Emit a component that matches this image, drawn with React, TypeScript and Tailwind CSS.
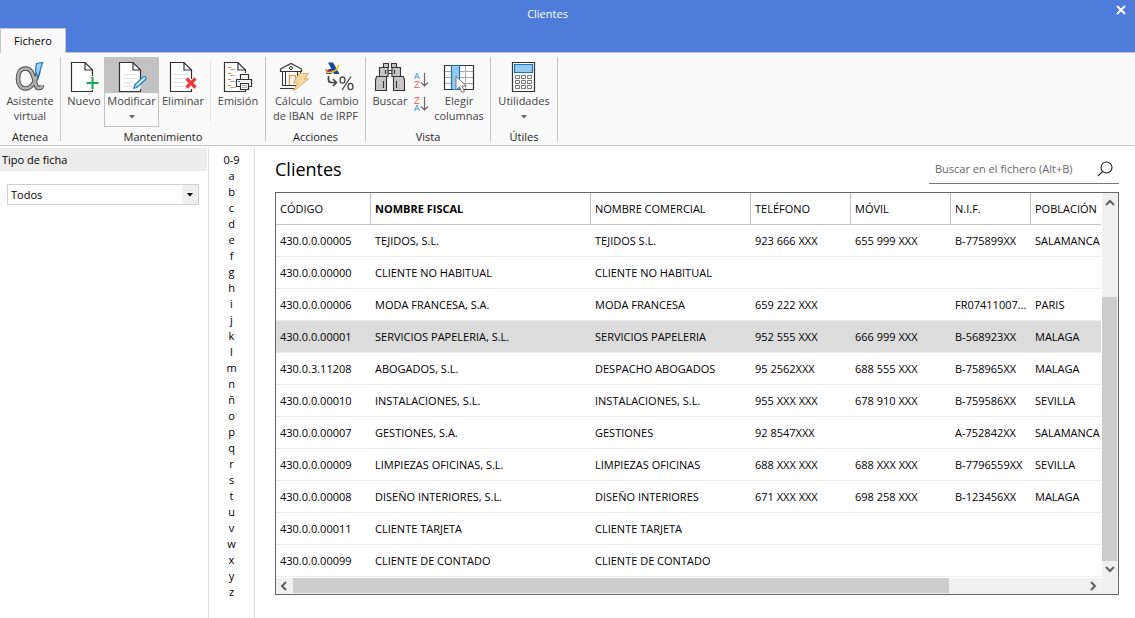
import { useState } from 'react';
import type { ReactNode } from 'react';
import { clsx } from 'clsx';

interface Cliente {
  codigo: string;
  fiscal: string;
  comercial: string;
  telefono: string;
  movil: string;
  nif: string;
  poblacion: string;
}

const CLIENTES: Cliente[] = [
  { codigo: '430.0.0.00005', fiscal: 'TEJIDOS, S.L.', comercial: 'TEJIDOS S.L.', telefono: '923 666 XXX', movil: '655 999 XXX', nif: 'B-775899XX', poblacion: 'SALAMANCA' },
  { codigo: '430.0.0.00000', fiscal: 'CLIENTE NO HABITUAL', comercial: 'CLIENTE NO HABITUAL', telefono: '', movil: '', nif: '', poblacion: '' },
  { codigo: '430.0.0.00006', fiscal: 'MODA FRANCESA, S.A.', comercial: 'MODA FRANCESA', telefono: '659 222 XXX', movil: '', nif: 'FR07411007...', poblacion: 'PARIS' },
  { codigo: '430.0.0.00001', fiscal: 'SERVICIOS PAPELERIA, S.L.', comercial: 'SERVICIOS PAPELERIA', telefono: '952 555 XXX', movil: '666 999 XXX', nif: 'B-568923XX', poblacion: 'MALAGA' },
  { codigo: '430.0.3.11208', fiscal: 'ABOGADOS, S.L.', comercial: 'DESPACHO ABOGADOS', telefono: '95 2562XXX', movil: '688 555 XXX', nif: 'B-758965XX', poblacion: 'MALAGA' },
  { codigo: '430.0.0.00010', fiscal: 'INSTALACIONES, S.L.', comercial: 'INSTALACIONES, S.L.', telefono: '955 XXX XXX', movil: '678 910 XXX', nif: 'B-759586XX', poblacion: 'SEVILLA' },
  { codigo: '430.0.0.00007', fiscal: 'GESTIONES, S.A.', comercial: 'GESTIONES', telefono: '92 8547XXX', movil: '', nif: 'A-752842XX', poblacion: 'SALAMANCA' },
  { codigo: '430.0.0.00009', fiscal: 'LIMPIEZAS OFICINAS, S.L.', comercial: 'LIMPIEZAS OFICINAS', telefono: '688 XXX XXX', movil: '688 XXX XXX', nif: 'B-7796559XX', poblacion: 'SEVILLA' },
  { codigo: '430.0.0.00008', fiscal: 'DISEÑO INTERIORES, S.L.', comercial: 'DISEÑO INTERIORES', telefono: '671 XXX XXX', movil: '698 258 XXX', nif: 'B-123456XX', poblacion: 'MALAGA' },
  { codigo: '430.0.0.00011', fiscal: 'CLIENTE TARJETA', comercial: 'CLIENTE TARJETA', telefono: '', movil: '', nif: '', poblacion: '' },
  { codigo: '430.0.0.00099', fiscal: 'CLIENTE DE CONTADO', comercial: 'CLIENTE DE CONTADO', telefono: '', movil: '', nif: '', poblacion: '' },
];

const COLUMNAS: { id: keyof Cliente; titulo: string; ancho: string }[] = [
  { id: 'codigo', titulo: 'CÓDIGO', ancho: 'w-[95px]' },
  { id: 'fiscal', titulo: 'NOMBRE FISCAL', ancho: 'w-[220px]' },
  { id: 'comercial', titulo: 'NOMBRE COMERCIAL', ancho: 'w-[160px]' },
  { id: 'telefono', titulo: 'TELÉFONO', ancho: 'w-[100px]' },
  { id: 'movil', titulo: 'MÓVIL', ancho: 'w-[100px]' },
  { id: 'nif', titulo: 'N.I.F.', ancho: 'w-[80px]' },
  { id: 'poblacion', titulo: 'POBLACIÓN', ancho: 'w-auto' },
];

const INDICE = ['0-9', ...'abcdefghijklmnñopqrstuvwxyz'];

/* ---------- Iconos ---------- */

function Hoja({ lineas, children }: { lineas?: boolean; children?: ReactNode }) {
  return (
    <svg width="30" height="32" viewBox="-1 0 30 32" fill="none">
      <path d="M1.5 1.5H15L22.5 9V30.5H1.5Z" fill="#fff" />
      <path d="M22.5 18V9L15 1.5H1.5V30.5H22.5V28" stroke="#333" strokeWidth="1.200" />
      <path d="M15 1.5V9H22.5" stroke="#333" strokeWidth="1.200" />
      {lineas && <path d="M5 13.5H19M5 17.5H17M5 21.5H16M5 25.5H15" stroke="#e2e2e2" />}
      {children}
    </svg>
  );
}

// Letra alfa con trazo hueco y pluma azul
function IconoAlfa() {
  const trazo = 'M24.5 10C22 19.5 18 27.5 11.5 27.5C6.500 27.500 4 23 4 17.500C4 11.500 6.500 7.500 11.500 7.500C19 7.500 19.500 17 22 24.500C23 28 27.500 28 28 24';
  return (
    <svg width="32" height="32" viewBox="0 0 32 32" fill="none">
      <path d={trazo} stroke="#505050" strokeWidth="4.600" />
      <path d={trazo} stroke="#b0b0b0" strokeWidth="2.600" />
      <path d="M22.500 2.500L28.500 1.500L24 17L21.500 10Z" fill="#9fd0f5" stroke="#1b75bb" strokeWidth="1.200" />
    </svg>
  );
}

function IconoNuevo() {
  return (
    <Hoja>
      <path d="M22.500 15V29M15.500 22H28.500" stroke="#fafafa" strokeWidth="4" />
      <path d="M22.500 16V28M16.500 22H28.500" stroke="#17a750" strokeWidth="2" />
    </Hoja>
  );
}

function IconoModificar() {
  return (
    <Hoja lineas>
      <path d="M15.800 27.500L17 23.500L25.500 15.800Q27.500 15 28 17L27.500 18.500L19.500 26Z" fill="#d5eafa" stroke="#1c83c6" strokeWidth="1.200" strokeLinejoin="round" />
      <path d="M17 23.500L19.500 26" stroke="#1c83c6" />
    </Hoja>
  );
}

function IconoEliminar() {
  return (
    <Hoja lineas>
      <path d="M17.500 17.500L26.500 26.500M26.500 17.500L17.500 26.500" stroke="#fafafa" strokeWidth="5" />
      <path d="M17.500 17.500L26.500 26.500M26.500 17.500L17.500 26.500" stroke="#ec3a3a" strokeWidth="3.200" />
    </Hoja>
  );
}

function IconoEmision() {
  return (
    <svg width="30" height="32" viewBox="0 0 30 32" fill="none">
      <path d="M22.500 12V9L15 1.500H1.500V30.500H22.500V29" fill="#fff" stroke="#333" strokeWidth="1.200" />
      <path d="M15 1.500V9H22.500" stroke="#333" strokeWidth="1.200" />
      <path d="M5 6.500H8M5 12.500H8M5 18.500H8M5 24.500H8" stroke="#f08c1e" />
      <path d="M7 8.500H12M7 14.500H12M7 20.500H12M7 26.500H13" stroke="#aaa" />
      <path d="M17.500 18V13.500H25.500V18M17 25.500H13.500V18.500H28.500V25.500H26" fill="#fafafa" stroke="#333" strokeWidth="1.200" />
      <path d="M17.500 22.500H25.500V28.500H17.500Z" fill="#fff" stroke="#333" strokeWidth="1.200" />
      <path d="M15 20.500H17" stroke="#1c83c6" />
      <path d="M19 24.500H24M19 26.500H24" stroke="#aaa" />
    </svg>
  );
}

function IconoIban() {
  return (
    <svg width="32" height="32" viewBox="0 0 32 32" fill="none">
      <path d="M2.500 8L13 2.500L23.500 8V10.500H2.500ZM4 24.500H18M2 27.500H18" stroke="#333" strokeWidth="1.200" />
      <path d="M4.500 11V24M7.500 11V24M19.500 11V15M22.500 11V13" stroke="#333" />
      <circle cx="13" cy="7" r="1.500" stroke="#333" />
      <path d="M11.500 24V14.500H17.500V22" stroke="#ee9440" strokeWidth="1.200" />
      <path d="M21.500 12.500H30.500L26.500 18H30.500L15.500 30L19.500 22H15Z" fill="#fad9a2" stroke="#e9a860" />
    </svg>
  );
}

function IconoIrpf() {
  return (
    <svg width="32" height="32" viewBox="0 0 32 32" fill="none">
      <path d="M5 1.500H10L16.500 13H11Z" fill="#1746a2" />
      <path d="M5 8.500L9 7.500L8.500 13H3Z" fill="#1746a2" />
      <path d="M3 10.500C6 12.500 14 11.500 16 3.500" stroke="#fbc500" strokeWidth="1.600" />
      <path d="M2.500 8.500C4 10 6 10.800 8.500 10.200" stroke="#e43a35" strokeWidth="1.200" />
      <path d="M5.500 15V18.500Q5.500 21.500 8.500 21.500H13M10 18L13.500 21.500L10 25" stroke="#444" strokeWidth="1.700" />
      <ellipse cx="19.500" cy="19" rx="2.500" ry="3.200" stroke="#444" strokeWidth="1.300" />
      <ellipse cx="27.500" cy="25.500" rx="2.500" ry="3.200" stroke="#444" strokeWidth="1.300" />
      <path d="M28 15.500L19 29" stroke="#444" strokeWidth="1.300" />
    </svg>
  );
}

function IconoBuscar() {
  return (
    <svg width="32" height="32" viewBox="0 0 32 32" fill="#c6c6c6" stroke="#333" strokeWidth="1.100">
      <path d="M14 9.500H18V12.500H14Z" fill="#fff" />
      <path d="M9.500 2.500H14.500V6.500H9.500ZM17.500 2.500H22.500V6.500H17.500Z" />
      <path d="M5.500 6.500H14V15.500H5.500ZM18 6.500H26.500V15.500H18Z" />
      <path d="M2.500 15.500H12.500V29.500H1.500V19ZM19.500 15.500H29.500L30.500 19V29.500H19.500Z" />
      <path d="M9.500 20V27M22.500 20V27M11.500 9V13M20.500 9V13" />
    </svg>
  );
}

function IconoOrden({ inverso }: { inverso?: boolean }) {
  const letraA = 'M0.500 6L3 0L5.500 6M1.500 4H4.500';
  const letraZ = 'M0.500 0.500H5L0.500 6.500H5.500';
  return (
    <svg width="16" height="16" viewBox="0 0 16 16" fill="none">
      <path d={inverso ? letraZ : letraA} stroke={inverso ? '#f06a6a' : '#49a1d8'} transform="translate(1 1)" />
      <path d={inverso ? letraA : letraZ} stroke={inverso ? '#49a1d8' : '#f06a6a'} transform="translate(1 9)" />
      <path d="M11.500 1V13.500M8 10.500L11.500 14L15 10.500" stroke="#666" strokeWidth="1.200" />
    </svg>
  );
}

function IconoColumnas() {
  return (
    <svg width="32" height="32" viewBox="0 0 32 32" fill="none">
      <path d="M1.500 4.500H30.500V28.500H1.500Z" fill="#fff" />
      <path d="M2 10.500H30M2 16.500H30M2 22.500H30M22.500 5V28" stroke="#aaa" />
      <path d="M1.500 4.500H30.500V28.500H1.500Z" stroke="#333" strokeWidth="1.200" />
      <path d="M8.500 4.500H16.500V28.500H8.500Z" fill="#94c9f0" stroke="#1b75bb" strokeWidth="1.200" />
      <path d="M13 15.500V29L16.500 26L19 31.500L21.500 30.500L19 25H23.500Z" fill="#fff" stroke="#777" />
    </svg>
  );
}

function IconoCalculadora() {
  return (
    <svg width="32" height="32" viewBox="0 0 32 32" fill="none">
      <path d="M4.500 1.500H26.500V30.500H4.500Z" fill="#fff" stroke="#333" strokeWidth="1.200" />
      <path d="M6.500 3.500H24.500V11.500H6.500Z" fill="#94c9f0" stroke="#1b75bb" strokeWidth="1.200" />
      <path
        d="M7.500 14.500H11.500V17.500H7.500ZM13.500 14.500H17.500V17.500H13.500ZM19.500 14.500H23.500V17.500H19.500ZM7.500 19.500H11.500V22.500H7.500ZM13.500 19.500H17.500V22.500H13.500ZM19.500 19.500H23.500V22.500H19.500ZM7.500 24.500H11.500V27.500H7.500ZM13.500 24.500H17.500V27.500H13.500ZM19.500 24.500H23.500V27.500H19.500Z"
        stroke="#777"
      />
    </svg>
  );
}

function Triangulo({ className }: { className?: string }) {
  return (
    <svg width="6" height="4" viewBox="0 0 6 4" fill="currentColor" className={className}>
      <path d="M0 0H6L3 3.500Z" />
    </svg>
  );
}

function Flecha({ d }: { d: string }) {
  return (
    <svg width="16" height="16" viewBox="0 0 16 16" fill="none">
      <path d={d} stroke="#606060" strokeWidth="2" />
    </svg>
  );
}

/* ---------- Cinta de opciones ---------- */

function Grupo({ titulo, ancho, children }: { titulo: string; ancho: string; children: ReactNode }) {
  return (
    <section aria-label={titulo} className={clsx('flex h-[84px] shrink-0 flex-col justify-between border-r border-[#c6c6c6]', ancho)}>
      <div className="flex justify-center">{children}</div>
      <div className="text-center text-[11px] leading-2 text-[#222]">{titulo}</div>
    </section>
  );
}

interface BotonCintaProps {
  icono: ReactNode;
  lineas: string[];
  ancho: string;
  activo?: boolean;
  menu?: boolean;
}

function BotonCinta({ icono, lineas, ancho, activo, menu }: BotonCintaProps) {
  return (
    <button
      type="button"
      className={clsx(
        'flex h-[70px] shrink-0 flex-col items-center border text-[11px] leading-[15px] whitespace-nowrap text-[#444]',
        ancho,
        activo ? 'border-[#c2c2c2] bg-[#fafafa]' : 'border-transparent'
      )}
    >
      <span className={clsx('flex w-full justify-center pt-[3px]', activo && 'bg-[#c2c2c2]')}>{icono}</span>
      {lineas.map((linea) => (
        <span key={linea}>{linea}</span>
      ))}
      {menu && <Triangulo className="mt-[7px] text-[#666]" />}
    </button>
  );
}

function Cinta() {
  return (
    <div className="flex overflow-hidden border-b border-[#c6c6c6] bg-[#fafafa] pt-1 pb-1">
      <Grupo titulo="Atenea" ancho="w-[61px]">
        <BotonCinta icono={<IconoAlfa />} lineas={['Asistente', 'virtual']} ancho="w-[58px]" />
      </Grupo>
      <Grupo titulo="Mantenimiento" ancho="w-[205px]">
        <BotonCinta icono={<IconoNuevo />} lineas={['Nuevo']} ancho="w-[40px]" />
        <BotonCinta icono={<IconoModificar />} lineas={['Modificar']} ancho="w-[55px]" activo menu />
        <BotonCinta icono={<IconoEliminar />} lineas={['Eliminar']} ancho="w-[48px]" />
        <div className="mx-[3px] mt-1 h-[60px] w-px bg-[#e0e0e0]" />
        <BotonCinta icono={<IconoEmision />} lineas={['Emisión']} ancho="w-[48px]" />
      </Grupo>
      <Grupo titulo="Acciones" ancho="w-[100px]">
        <BotonCinta icono={<IconoIban />} lineas={['Cálculo', 'de IBAN']} ancho="w-[47px]" />
        <BotonCinta icono={<IconoIrpf />} lineas={['Cambio', 'de IRPF']} ancho="w-[44px]" />
      </Grupo>
      <Grupo titulo="Vista" ancho="w-[125px]">
        <BotonCinta icono={<IconoBuscar />} lineas={['Buscar']} ancho="w-[42px]" />
        <div className="flex w-[20px] flex-col items-center gap-2 pt-[15px]">
          <button type="button" aria-label="Orden ascendente">
            <IconoOrden />
          </button>
          <button type="button" aria-label="Orden descendente">
            <IconoOrden inverso />
          </button>
        </div>
        <BotonCinta icono={<IconoColumnas />} lineas={['Elegir', 'columnas']} ancho="w-[56px]" />
      </Grupo>
      <Grupo titulo="Útiles" ancho="w-[67px]">
        <BotonCinta icono={<IconoCalculadora />} lineas={['Utilidades']} ancho="w-[60px]" menu />
      </Grupo>
    </div>
  );
}

/* ---------- Tabla ---------- */

function TablaClientes() {
  const [seleccionado, setSeleccionado] = useState('430.0.0.00001');

  return (
    <div className="grid grid-cols-[minmax(0,1fr)_16px] border border-[#666]">
      <div className="overflow-hidden pr-px pb-px">
        <table className="w-full table-fixed border-separate border-spacing-0 text-left text-[11px] leading-4 whitespace-nowrap text-black">
          <thead>
            <tr className="h-8">
              {COLUMNAS.map((col) => (
                <th
                  key={col.id}
                  scope="col"
                  className={clsx(
                    'overflow-hidden border-b border-[#c2c2c2] p-0 pl-1',
                    col.ancho,
                    col.id === 'fiscal' ? 'font-bold' : 'font-normal',
                    col.id !== 'poblacion' && 'border-r'
                  )}
                >
                  {col.titulo}
                </th>
              ))}
            </tr>
          </thead>
          <tbody>
            {CLIENTES.map((cliente) => (
              <tr
                key={cliente.codigo}
                onClick={() => setSeleccionado(cliente.codigo)}
                className={clsx('h-8', cliente.codigo === seleccionado && 'bg-[#dcdcdc]')}
              >
                {COLUMNAS.map((col) => (
                  <td key={col.id} className="overflow-hidden border-b border-[#ededed] p-0 pl-1">
                    {cliente[col.id]}
                  </td>
                ))}
              </tr>
            ))}
          </tbody>
        </table>
      </div>

      {/* Barra vertical */}
      <div className="flex flex-col bg-[#f0f0f0]">
        <button type="button" aria-label="Subir" className="flex h-[17px] items-center justify-center">
          <Flecha d="M4 11L8 7L12 11" />
        </button>
        <div className="flex-[87]" />
        <div className="mr-px flex-[263] bg-[#cdcdcd]" />
        <button type="button" aria-label="Bajar" className="flex h-[17px] items-center justify-center">
          <Flecha d="M4 5L8 9L12 5" />
        </button>
      </div>

      {/* Barra horizontal */}
      <div className="flex h-4 bg-[#f0f0f0]">
        <button type="button" aria-label="Izquierda" className="w-[17px]">
          <Flecha d="M10 4L6 8L10 12" />
        </button>
        <div className="mb-px flex-[656] bg-[#cdcdcd]" />
        <div className="flex-[136]" />
        <button type="button" aria-label="Derecha" className="w-[17px]">
          <Flecha d="M6 4L10 8L6 12" />
        </button>
      </div>
      <div className="bg-[#f0f0f0]" />
    </div>
  );
}

export default function App() {
  return (
    <div className="flex min-h-screen flex-col bg-white font-['Open_Sans','Noto_Sans',sans-serif] text-[11px] text-black">
      <header className="flex flex-col bg-[#4d7cdb]">
        <div className="flex h-7 items-center">
          <h1 className="flex-1 pl-3 text-center text-[11px] text-white">Clientes</h1>
          <button type="button" aria-label="Cerrar" className="mr-2 ml-8 pb-2">
            <svg width="12" height="12" viewBox="0 0 12 12" stroke="#fff" strokeWidth="2">
              <path d="M2 2L10 10M10 2L2 10" />
            </svg>
          </button>
        </div>
        <nav className="flex border-b border-[#c6c6c6]">
          <button type="button" className="-mb-px h-[25px] w-[66px] border border-b-0 border-[#c6c6c6] bg-[#fafafa] text-[11px]">
            Fichero
          </button>
        </nav>
      </header>

      <Cinta />

      <div className="flex flex-1 pt-[2px]">
        <aside className="w-[209px] shrink-0 border-r border-[#dcdcdc]">
          <label htmlFor="tipo-ficha" className="mr-px block h-[23px] bg-[#ededed] pl-[2px] leading-6">
            Tipo de ficha
          </label>
          <div className="relative mt-[13px] ml-[7px] w-[192px]">
            <select id="tipo-ficha" className="block h-[21px] w-full appearance-none border border-[#d0d0d0] bg-white pt-px pl-[3px] text-[11px]">
              <option>Todos</option>
            </select>
            <span className="pointer-events-none absolute inset-y-px right-px flex w-4 items-center justify-center bg-[#f0f0f0]">
              <Triangulo />
            </span>
          </div>
        </aside>

        <nav aria-label="Índice" className="flex w-[46px] shrink-0 flex-col border-r border-[#dcdcdc] pt-1">
          {INDICE.map((letra) => (
            <button key={letra} type="button" className="h-4 text-[11px] leading-4">
              {letra}
            </button>
          ))}
        </nav>

        <main className="min-w-0 flex-1 pr-4 pl-5">
          <div className="mb-2 flex h-9 items-end justify-between">
            <h2 className="pb-[1px] text-lg leading-7">Clientes</h2>
            <div className="flex h-[29px] w-[190px] items-center border-b border-[#777]">
              <input
                type="text"
                aria-label="Buscar en el fichero"
                placeholder="Buscar en el fichero (Alt+B)"
                className="min-w-0 flex-1 pl-[6px] text-[11px] outline-none placeholder:text-[#666]"
              />
              <button type="button" aria-label="Buscar" className="mr-[6px]">
                <svg width="16" height="16" viewBox="0 0 16 16" fill="none" stroke="#222" strokeWidth="1.100">
                  <circle cx="9.500" cy="6.500" r="5.500" />
                  <path d="M5.500 10.500L0.800 15.200" />
                </svg>
              </button>
            </div>
          </div>
          <TablaClientes />
        </main>
      </div>
    </div>
  );
}
